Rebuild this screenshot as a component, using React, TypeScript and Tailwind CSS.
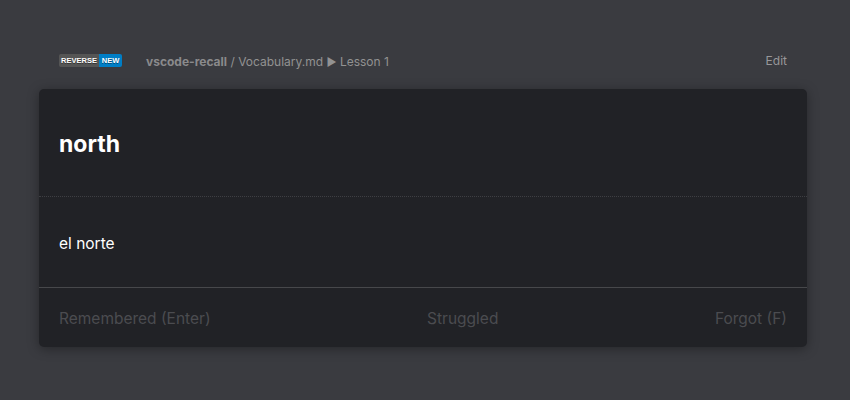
import React from "react";

export default function App() {
  return (
    <div
      className="w-[850px] h-[400px] bg-[#3a3b40] pl-[39px] pt-[40px]"
      style={{ fontFamily: "Inter, 'Noto Sans', sans-serif" }}
    >
      <div className="w-[768px]">
        <div className="flex items-center h-[40px] px-[20px] mb-[9px]">
          <div
            className="flex h-[13px] rounded-[2px] overflow-hidden text-[7.5px] font-bold leading-[13px] text-white"
            style={{ fontFamily: "'Liberation Sans', Arial, sans-serif" }}
          >
            <span className="bg-[#555555] w-[40px] text-center [text-shadow:0_1px_0_rgba(0,0,0,0.4)]">REVERSE</span>
            <span className="bg-[#007ec6] w-[23px] text-center [text-shadow:0_1px_0_rgba(0,0,0,0.4)]">NEW</span>
          </div>
          <div className="ml-[24px] text-[12px] text-[#929292] leading-[16px] mt-[3px]">
            <span className="font-bold text-[#8a8a8c]">vscode-recall</span>
            <span> / Vocabulary.md </span>
            <span className="text-[11px]">▶</span>
            <span> Lesson 1</span>
          </div>
          <div className="ml-auto text-[12px] text-[#97979a] leading-[16px] mt-[1px]">Edit</div>
        </div>
        <div className="bg-[#212226] rounded-[5px] shadow-[0_2px_12px_rgba(0,0,0,0.35)] overflow-hidden">
          <div className="h-[108px] px-[20px] flex items-center border-b border-dotted border-[#3e3f43]">
            <div className="text-[23px] font-bold text-white leading-[28px] mt-[2px]">north</div>
          </div>
          <div className="h-[91px] px-[20px] flex items-center border-b border-[#47484b]">
            <div className="text-[15.5px] text-white leading-[24px] mt-[4px]">el norte</div>
          </div>
          <div className="h-[59px] px-[20px] flex items-center justify-between text-[15.5px] text-[#4b4c50] leading-[24px]">
            <span className="mt-[2px]">Remembered (Enter)</span>
            <span className="mt-[2px]">Struggled</span>
            <span className="mt-[2px]">Forgot (F)</span>
          </div>
        </div>
      </div>
    </div>
  );
}
